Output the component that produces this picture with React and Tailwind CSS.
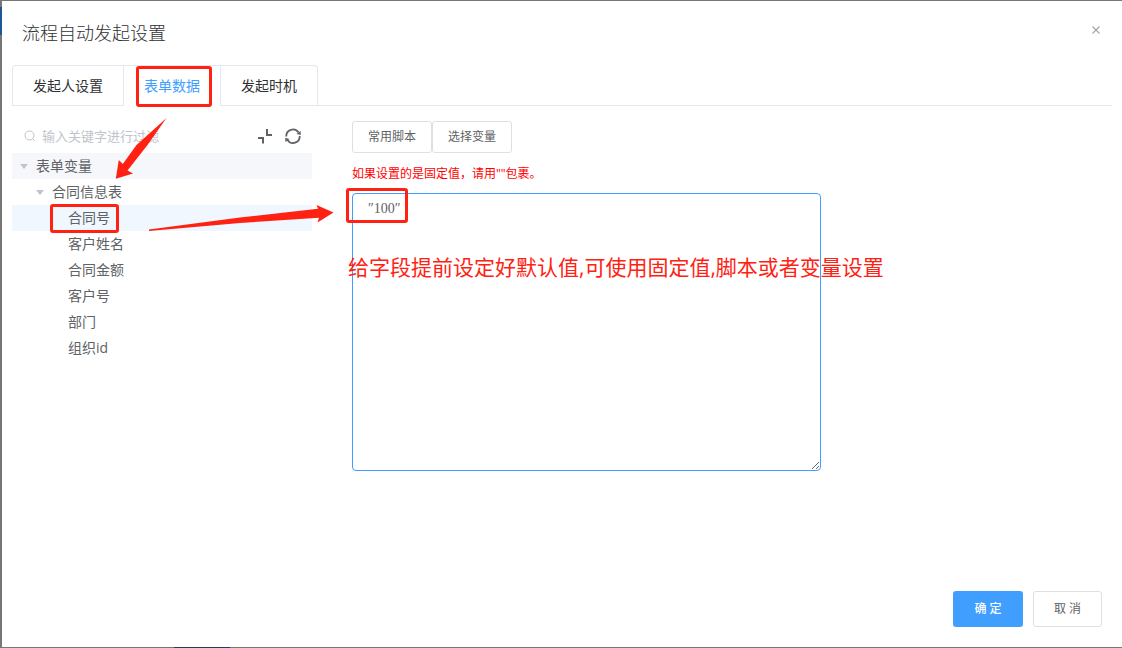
import React, { useState } from 'react';

const tabs = ['发起人设置', '表单数据', '发起时机'];

const fields = ['合同号', '客户姓名', '合同金额', '客户号', '部门', '组织id'];

function Caret() {
  return (
    <svg width="8" height="5" viewBox="0 0 8 5" className="shrink-0" fill="#c0c4cc">
      <path d="M0 0h8L4 5z" />
    </svg>
  );
}

function Mark({ className }) {
  return <span className={`absolute pointer-events-none z-10 rounded-[3px] border-3 border-[#ff2112] ${className}`} />;
}

function Tabs({ active, onChange }) {
  return (
    <div role="tablist" className="mx-[10px] flex h-[41px] text-sm text-[#303133]">
      <div className="flex rounded-t border-t border-x border-[#e4e7ed]">
        {tabs.map((tab, i) => (
          <button
            key={tab}
            role="tab"
            aria-selected={active === tab}
            onClick={() => onChange(tab)}
            className={`relative px-5 border-b ${i > 0 ? 'border-l border-l-[#e4e7ed]' : ''} ${
              active === tab ? 'border-b-white text-[#409eff]' : 'border-b-[#e4e7ed]'
            }`}
          >
            {tab}
            {tab === '表单数据' && <Mark className="left-3 right-2 top-0 -bottom-[2px]" />}
          </button>
        ))}
      </div>
      <div className="flex-1 border-b border-[#e4e7ed]" />
    </div>
  );
}

function Tree() {
  const [selected, setSelected] = useState('合同号');
  return (
    <aside className="relative w-[300px] shrink-0 text-sm text-[#606266]">
      <div className="flex h-8 items-center pb-[2px] pl-3 pr-[11px]">
        <svg width="12" height="12" viewBox="0 0 12 12" fill="none" stroke="#c0c4cc" className="shrink-0">
          <circle cx="5.5" cy="5.5" r="4.5" />
          <path d="M8.8 8.8l2 2" />
        </svg>
        <input
          aria-label="输入关键字进行过滤"
          placeholder="输入关键字进行过滤"
          className="ml-[6px] min-w-0 flex-1 text-[13px] outline-none placeholder:text-[#c0c4cc]"
        />
        <button aria-label="折叠" className="mr-3">
          <svg width="16" height="16" viewBox="0 0 16 16" fill="none" stroke="#606266" strokeWidth="2">
            <path d="M10 1v6h5M1 10h5v5.500" />
          </svg>
        </button>
        <button aria-label="刷新">
          <svg width="16" height="16" viewBox="0 0 16 16" fill="none" stroke="#606266" strokeWidth="1.8">
            <path d="M1.300 8.500A6.700 6.700 0 0 1 13.600 4.500M14.700 8A6.700 6.700 0 0 1 2.400 12" />
            <path d="M15.700 3V7L11.500 6zM.300 14V9.800L4.500 11z" fill="#606266" stroke="none" />
          </svg>
        </button>
      </div>
      <ul>
        <li>
          <div className="flex h-[26px] items-center gap-2 bg-[#f5f7fa] pl-2">
            <Caret />
            表单变量
          </div>
          <ul>
            <li>
              <div className="flex h-[26px] items-center gap-2 pl-6">
                <Caret />
                合同信息表
              </div>
              <ul>
                {fields.map((f) => (
                  <li key={f} className="relative">
                    <button
                      onClick={() => setSelected(f)}
                      className={`block h-[26px] w-full pl-14 text-left ${selected === f ? 'bg-[#f0f7ff]' : ''}`}
                    >
                      {f}
                    </button>
                    {f === '合同号' && <Mark className="left-[38px] w-[69px] -top-px -bottom-[2px]" />}
                  </li>
                ))}
              </ul>
            </li>
          </ul>
        </li>
      </ul>
      <svg
        width="322"
        height="120"
        viewBox="12 115 322 120"
        fill="#ff2112"
        className="pointer-events-none absolute left-0 -top-[6px] z-10 max-w-none"
      >
        <path d="M166.500 118L147.500 145 127.500 170.500 133 173.500 115.800 178.800 118.800 160 122.800 164 136.500 145z" />
        <path d="M149 229.500L240 217.500 318 208.800 316.500 205 333.500 212.500 317.500 222.500 319 217.800 240 223z M149 229.500v1.500L240 223z" />
      </svg>
    </aside>
  );
}

function Editor() {
  return (
    <section className="w-[469px]">
      <div className="flex text-xs text-[#606266]">
        <button className="h-8 w-20 rounded-[3px] border border-[#dcdfe6]">常用脚本</button>
        <button className="h-8 w-20 rounded-[3px] border border-[#dcdfe6]">选择变量</button>
      </div>
      <label htmlFor="script" className="block h-10 text-xs leading-[42px] text-[#ff0000]">
        如果设置的是固定值，请用""包裹。
      </label>
      <div className="relative">
        <textarea
          id="script"
          defaultValue={'″100″'}
          className="block h-[278px] w-full resize rounded border border-[#409eff] px-[15px] py-[5px] font-['Liberation_Serif',serif] text-sm text-[#606266] outline-none"
        />
        <Mark className="-left-[6px] -top-[5px] h-[35px] w-[62px]" />
        <p className="pointer-events-none absolute -left-1 top-[58px] whitespace-nowrap text-[21px] leading-8 text-[#ff2112]">
          给字段提前设定好默认值,可使用固定值,脚本或者变量设置
        </p>
      </div>
    </section>
  );
}

export default function App() {
  const [active, setActive] = useState('表单数据');
  return (
    <div className="relative flex min-h-screen flex-col border-l-2 border-y border-[#777] bg-white font-['Open_Sans','Noto_Sans_CJK_SC',sans-serif]">
      <span className="absolute -left-[2px] top-[6px] h-7 w-[2px] bg-[#1d5796]" />
      <span className="absolute -bottom-px left-[172px] h-px w-14 bg-[#263c61]" />
      <header className="flex h-16 items-start justify-between px-5 pt-[18px]">
        <h1 className="text-lg font-light text-[#303133]">流程自动发起设置</h1>
        <button aria-label="关闭" className="mt-[5px] p-[2px]">
          <svg width="8" height="8" viewBox="0 0 8 8" fill="none" stroke="#a4a6aa" strokeWidth="1.2">
            <path d="M.500.500l7 7M7.500.500l-7 7" />
          </svg>
        </button>
      </header>
      <Tabs active={active} onChange={setActive} />
      <main className="flex flex-1 gap-10 px-[10px] pt-[15px]">
        <Tree />
        <Editor />
      </main>
      <footer className="flex justify-end gap-[10px] px-5 pb-5 text-xs">
        <button className="h-9 w-[70px] rounded-[3px] bg-[#409eff] font-medium text-white">确 定</button>
        <button className="h-9 w-[69px] rounded-[3px] border border-[#dcdfe6] text-[#606266]">取 消</button>
      </footer>
    </div>
  );
}
